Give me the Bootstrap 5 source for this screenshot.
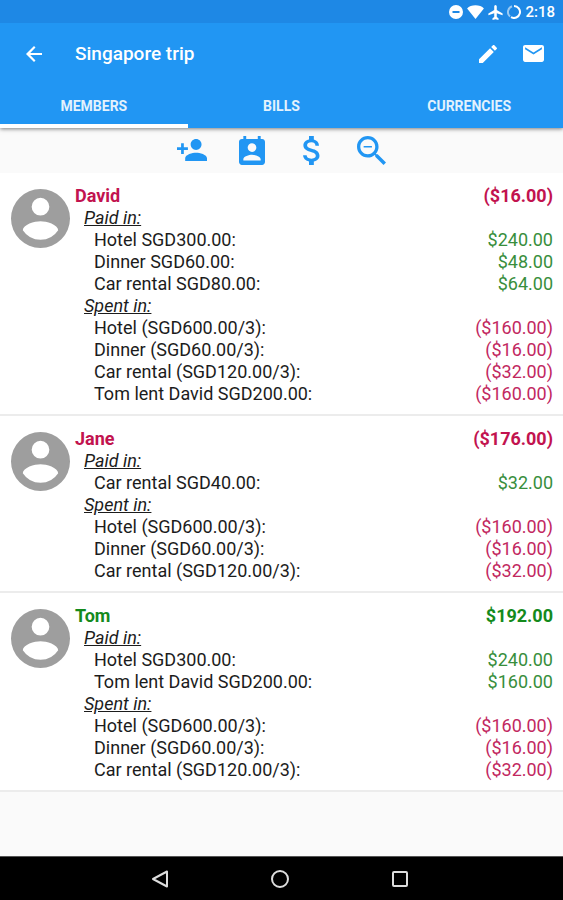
<!DOCTYPE html>
<html lang="en">
<head>
<meta charset="utf-8">
<meta name="viewport" content="width=device-width, initial-scale=1">
<title>Singapore trip</title>
<link href="https://cdn.jsdelivr.net/npm/bootstrap@5.3.0/dist/css/bootstrap.min.css" rel="stylesheet">
<style>
body { font-family: Roboto, "Liberation Sans", sans-serif; font-size: 18px; line-height: 22px; background: #fafafa; color: #1c1c1c; }
svg { display: block; fill: currentColor; }
.status { background: #1e88e5; height: 23px; padding: 1px 8px 0 0; gap: 4px; font-size: 15px; font-weight: 500; }
.top { background: #2196f3; box-shadow: 0 1px 4px rgba(0,0,0,.5); z-index: 2; }
.bar { height: 61px; padding: 0 19px 0 26px; }
.bar h1 { font-size: 19px; line-height: 22px; font-weight: 500; margin-left: 33px; }
.plain { background: none; border: 0; padding: 0; color: inherit; }
.mail { margin-left: 26px; }
.tabs .nav-link { height: 44px; padding: 0; color: #e3f2fd; font-size: 14px; font-weight: 700; border-radius: 0; border-bottom: 4px solid transparent; border-top: 4px solid transparent; line-height: 36px; }
.tabs .nav-link.active { color: #e3f2fd; border-bottom-color: #fff; }
.tools { height: 45px; color: #2196f3; }
.tools button { width: 60px; height: 44px; }
.member { padding: 12px 10px 9px 11px; border-bottom: 2px solid #ececec; background: #fff; }
.avatar { color: #9e9e9e; margin: 4px 5px 0 0; }
.member h2 { font-size: 18px; line-height: 22px; }
.member h2, .total { font-weight: 700; }
.member h3 { font-size: 18px; line-height: 22px; font-weight: 400; font-style: italic; text-decoration: underline; padding-left: 9px; }
.entry { padding-left: 19px; font-weight: 400; }
.debit { color: #c2285f; }
.credit { color: #388e3c; }
h2.debit, .total.debit { color: #c2134f; }
h2.credit, .total.credit { color: #148a1c; }
.system { height: 44px; gap: 102px; padding-right: 3px; background: #000; color: #ddd; border-top: 1px solid #555; }
.system svg { fill: none; stroke: currentColor; stroke-width: 2; }
</style>
<script src="https://cdn.jsdelivr.net/npm/bootstrap@5.3.0/dist/js/bootstrap.bundle.min.js"></script>
</head>
<body>
<div class="d-flex flex-column min-vh-100">
  <header class="top text-white position-relative">
    <div class="status d-flex align-items-center justify-content-end">
      <svg width="14" height="14" viewBox="2 2 20 20" aria-hidden="true"><path fill-rule="evenodd" d="M12 2a10 10 0 100 20 10 10 0 000-20zM7 10.700h10v2.600H7z"/></svg>
      <svg width="17" height="14" viewBox="0 2 24 20" aria-hidden="true"><path d="M12 22 24 7C19 1 5 1 0 7z"/></svg>
      <svg width="15" height="15" viewBox="2 2 20 20" aria-hidden="true"><path d="M21.500 15.500v-2.200l-7.800-4.800V4c0-1-.8-2-1.700-2s-1.700 1-1.700 2v4.500l-7.800 4.800v2.200l7.800-2.400v5l-2.300 1.700V22l4-1 4 1v-2.200l-2.300-1.700v-5z"/></svg>
      <svg width="14" height="14" viewBox="0 0 14 14" aria-hidden="true"><path d="M7 1a6 6 0 11-3 11.200" fill="none" stroke="#fff" stroke-width="2"/><path d="M3 11.500A6 6 0 015 1.300" fill="none" stroke="#fff" stroke-opacity=".55" stroke-width="2"/></svg>
      <span>2:18</span>
    </div>
    <div class="bar d-flex align-items-center">
      <button class="plain" type="button" aria-label="Back"><svg width="16" height="16" viewBox="4 4 16 16"><path d="M20 10.900H8.200l5.300-5.300L12 4l-8 8 8 8 1.500-1.600-5.300-5.300H20z"/></svg></button>
      <h1 class="mb-0 flex-grow-1">Singapore trip</h1>
      <button class="plain" type="button" aria-label="Edit"><svg width="18" height="18" viewBox="3 3 18 18"><path d="M3 17.250V21h3.750L17.810 9.940l-3.750-3.750L3 17.250zM20.710 7.040c.39-.39.39-1.020 0-1.410l-2.340-2.340c-.39-.39-1.020-.39-1.410 0l-1.830 1.830 3.750 3.750 1.830-1.830z"/></svg></button>
      <button class="plain mail" type="button" aria-label="Send mail"><svg width="21" height="17" viewBox="2 4 20 16"><path d="M20 4H4c-1.100 0-2 .9-2 2v12c0 1.100.9 2 2 2h16c1.100 0 2-.9 2-2V6c0-1.100-.9-2-2-2zm0 4-8 5-8-5V6l8 5 8-5v2z"/></svg></button>
    </div>
    <nav class="tabs nav nav-justified">
      <a class="nav-link active" href="#members" aria-current="page">MEMBERS</a>
      <a class="nav-link" href="#bills">BILLS</a>
      <a class="nav-link" href="#currencies">CURRENCIES</a>
    </nav>
  </header>

  <div class="tools d-flex justify-content-center">
    <button class="plain d-flex align-items-center justify-content-center" type="button" aria-label="Add member"><svg width="30" height="22" viewBox="1 4 22 16"><path d="M15 12c2.210 0 4-1.790 4-4s-1.790-4-4-4-4 1.790-4 4 1.790 4 4 4zm-9-2V7H4v3H1v2h3v3h2v-3h3v-2H6zm9 4c-2.670 0-8 1.340-8 4v2h16v-2c0-2.660-5.330-4-8-4z"/></svg></button>
    <button class="plain d-flex align-items-center justify-content-center" type="button" aria-label="Contacts"><svg width="26" height="29" viewBox="3 1 18 20"><path d="M19 3h-1V1h-2v2H8V1H6v2H5c-1.110 0-2 .9-2 2v14c0 1.100.89 2 2 2h14c1.100 0 2-.9 2-2V5c0-1.100-.9-2-2-2zm-7 3c1.660 0 3 1.340 3 3s-1.340 3-3 3-3-1.340-3-3 1.340-3 3-3zm6 12H6v-1c0-2 4-3.100 6-3.100s6 1.100 6 3.100v1z"/></svg></button>
    <button class="plain d-flex align-items-center justify-content-center" type="button" aria-label="Currency"><svg width="17" height="29" viewBox="6.300 3 10.500 18"><path d="M11.800 10.900c-2.270-.59-3-1.200-3-2.150 0-1.090 1.010-1.850 2.700-1.850 1.780 0 2.440.85 2.500 2.100h2.210c-.07-1.720-1.120-3.300-3.210-3.810V3h-3v2.160c-1.940.42-3.500 1.680-3.500 3.610 0 2.310 1.910 3.460 4.700 4.130 2.500.6 3 1.480 3 2.410 0 .69-.49 1.790-2.700 1.790-2.060 0-2.870-.92-2.980-2.100h-2.200c.12 2.190 1.760 3.420 3.680 3.830V21h3v-2.150c1.950-.37 3.500-1.500 3.500-3.550 0-2.840-2.430-3.810-4.700-4.400z"/></svg></button>
    <button class="plain d-flex align-items-center justify-content-center" type="button" aria-label="Zoom out"><svg width="29" height="29" viewBox="3 3 17.490 17.490"><path d="M15.500 14h-.79l-.28-.27C15.410 12.590 16 11.110 16 9.500 16 5.910 13.090 3 9.500 3S3 5.910 3 9.500 5.910 16 9.500 16c1.610 0 3.090-.59 4.230-1.570l.27.28v.79l5 4.990L20.490 19l-4.990-5zm-6 0C7.010 14 5 11.990 5 9.500S7.010 5 9.500 5 14 7.010 14 9.500 11.990 14 9.500 14zM7 9h5v1H7z"/></svg></button>
  </div>

  <main class="flex-grow-1" id="members">
    <section class="member d-flex align-items-start">
      <svg class="avatar flex-shrink-0" width="59" height="59" viewBox="2 2 20 20" aria-hidden="true"><path d="M12 2a10 10 0 100 20 10 10 0 000-20zm0 3a3 3 0 110 6 3 3 0 010-6zm0 14.200a7.200 7.200 0 01-6-3.220c.03-1.990 4-3.080 6-3.080s5.970 1.090 6 3.080a7.200 7.200 0 01-6 3.220z" fill-rule="evenodd"/></svg>
      <div class="flex-grow-1">
        <div class="d-flex justify-content-between"><h2 class="mb-0 debit">David</h2><span class="total debit">($16.00)</span></div>
        <h3 class="mb-0">Paid in:</h3>
        <div class="entry d-flex justify-content-between"><span>Hotel SGD300.00:</span><span class="credit">$240.00</span></div>
        <div class="entry d-flex justify-content-between"><span>Dinner SGD60.00:</span><span class="credit">$48.00</span></div>
        <div class="entry d-flex justify-content-between"><span>Car rental SGD80.00:</span><span class="credit">$64.00</span></div>
        <h3 class="mb-0">Spent in:</h3>
        <div class="entry d-flex justify-content-between"><span>Hotel (SGD600.00/3):</span><span class="debit">($160.00)</span></div>
        <div class="entry d-flex justify-content-between"><span>Dinner (SGD60.00/3):</span><span class="debit">($16.00)</span></div>
        <div class="entry d-flex justify-content-between"><span>Car rental (SGD120.00/3):</span><span class="debit">($32.00)</span></div>
        <div class="entry d-flex justify-content-between"><span>Tom lent David SGD200.00:</span><span class="debit">($160.00)</span></div>
      </div>
    </section>
    <section class="member d-flex align-items-start">
      <svg class="avatar flex-shrink-0" width="59" height="59" viewBox="2 2 20 20" aria-hidden="true"><path d="M12 2a10 10 0 100 20 10 10 0 000-20zm0 3a3 3 0 110 6 3 3 0 010-6zm0 14.200a7.200 7.200 0 01-6-3.220c.03-1.990 4-3.080 6-3.080s5.970 1.090 6 3.080a7.200 7.200 0 01-6 3.220z" fill-rule="evenodd"/></svg>
      <div class="flex-grow-1">
        <div class="d-flex justify-content-between"><h2 class="mb-0 debit">Jane</h2><span class="total debit">($176.00)</span></div>
        <h3 class="mb-0">Paid in:</h3>
        <div class="entry d-flex justify-content-between"><span>Car rental SGD40.00:</span><span class="credit">$32.00</span></div>
        <h3 class="mb-0">Spent in:</h3>
        <div class="entry d-flex justify-content-between"><span>Hotel (SGD600.00/3):</span><span class="debit">($160.00)</span></div>
        <div class="entry d-flex justify-content-between"><span>Dinner (SGD60.00/3):</span><span class="debit">($16.00)</span></div>
        <div class="entry d-flex justify-content-between"><span>Car rental (SGD120.00/3):</span><span class="debit">($32.00)</span></div>
      </div>
    </section>
    <section class="member d-flex align-items-start">
      <svg class="avatar flex-shrink-0" width="59" height="59" viewBox="2 2 20 20" aria-hidden="true"><path d="M12 2a10 10 0 100 20 10 10 0 000-20zm0 3a3 3 0 110 6 3 3 0 010-6zm0 14.200a7.200 7.200 0 01-6-3.220c.03-1.990 4-3.080 6-3.080s5.970 1.090 6 3.080a7.200 7.200 0 01-6 3.220z" fill-rule="evenodd"/></svg>
      <div class="flex-grow-1">
        <div class="d-flex justify-content-between"><h2 class="mb-0 credit">Tom</h2><span class="total credit">$192.00</span></div>
        <h3 class="mb-0">Paid in:</h3>
        <div class="entry d-flex justify-content-between"><span>Hotel SGD300.00:</span><span class="credit">$240.00</span></div>
        <div class="entry d-flex justify-content-between"><span>Tom lent David SGD200.00:</span><span class="credit">$160.00</span></div>
        <h3 class="mb-0">Spent in:</h3>
        <div class="entry d-flex justify-content-between"><span>Hotel (SGD600.00/3):</span><span class="debit">($160.00)</span></div>
        <div class="entry d-flex justify-content-between"><span>Dinner (SGD60.00/3):</span><span class="debit">($16.00)</span></div>
        <div class="entry d-flex justify-content-between"><span>Car rental (SGD120.00/3):</span><span class="debit">($32.00)</span></div>
      </div>
    </section>
  </main>

  <footer class="system d-flex align-items-center justify-content-center">
    <button class="plain" type="button" aria-label="Back"><svg width="18" height="18" viewBox="0 0 18 18"><path d="M2 9 16 1.500v15z" stroke-linejoin="round"/></svg></button>
    <button class="plain" type="button" aria-label="Home"><svg width="18" height="18" viewBox="0 0 18 18"><circle cx="9" cy="9" r="8"/></svg></button>
    <button class="plain" type="button" aria-label="Recent apps"><svg width="18" height="18" viewBox="0 0 18 18"><rect x="2" y="2" width="14" height="14" rx="1"/></svg></button>
  </footer>
</div>
</body>
</html>
